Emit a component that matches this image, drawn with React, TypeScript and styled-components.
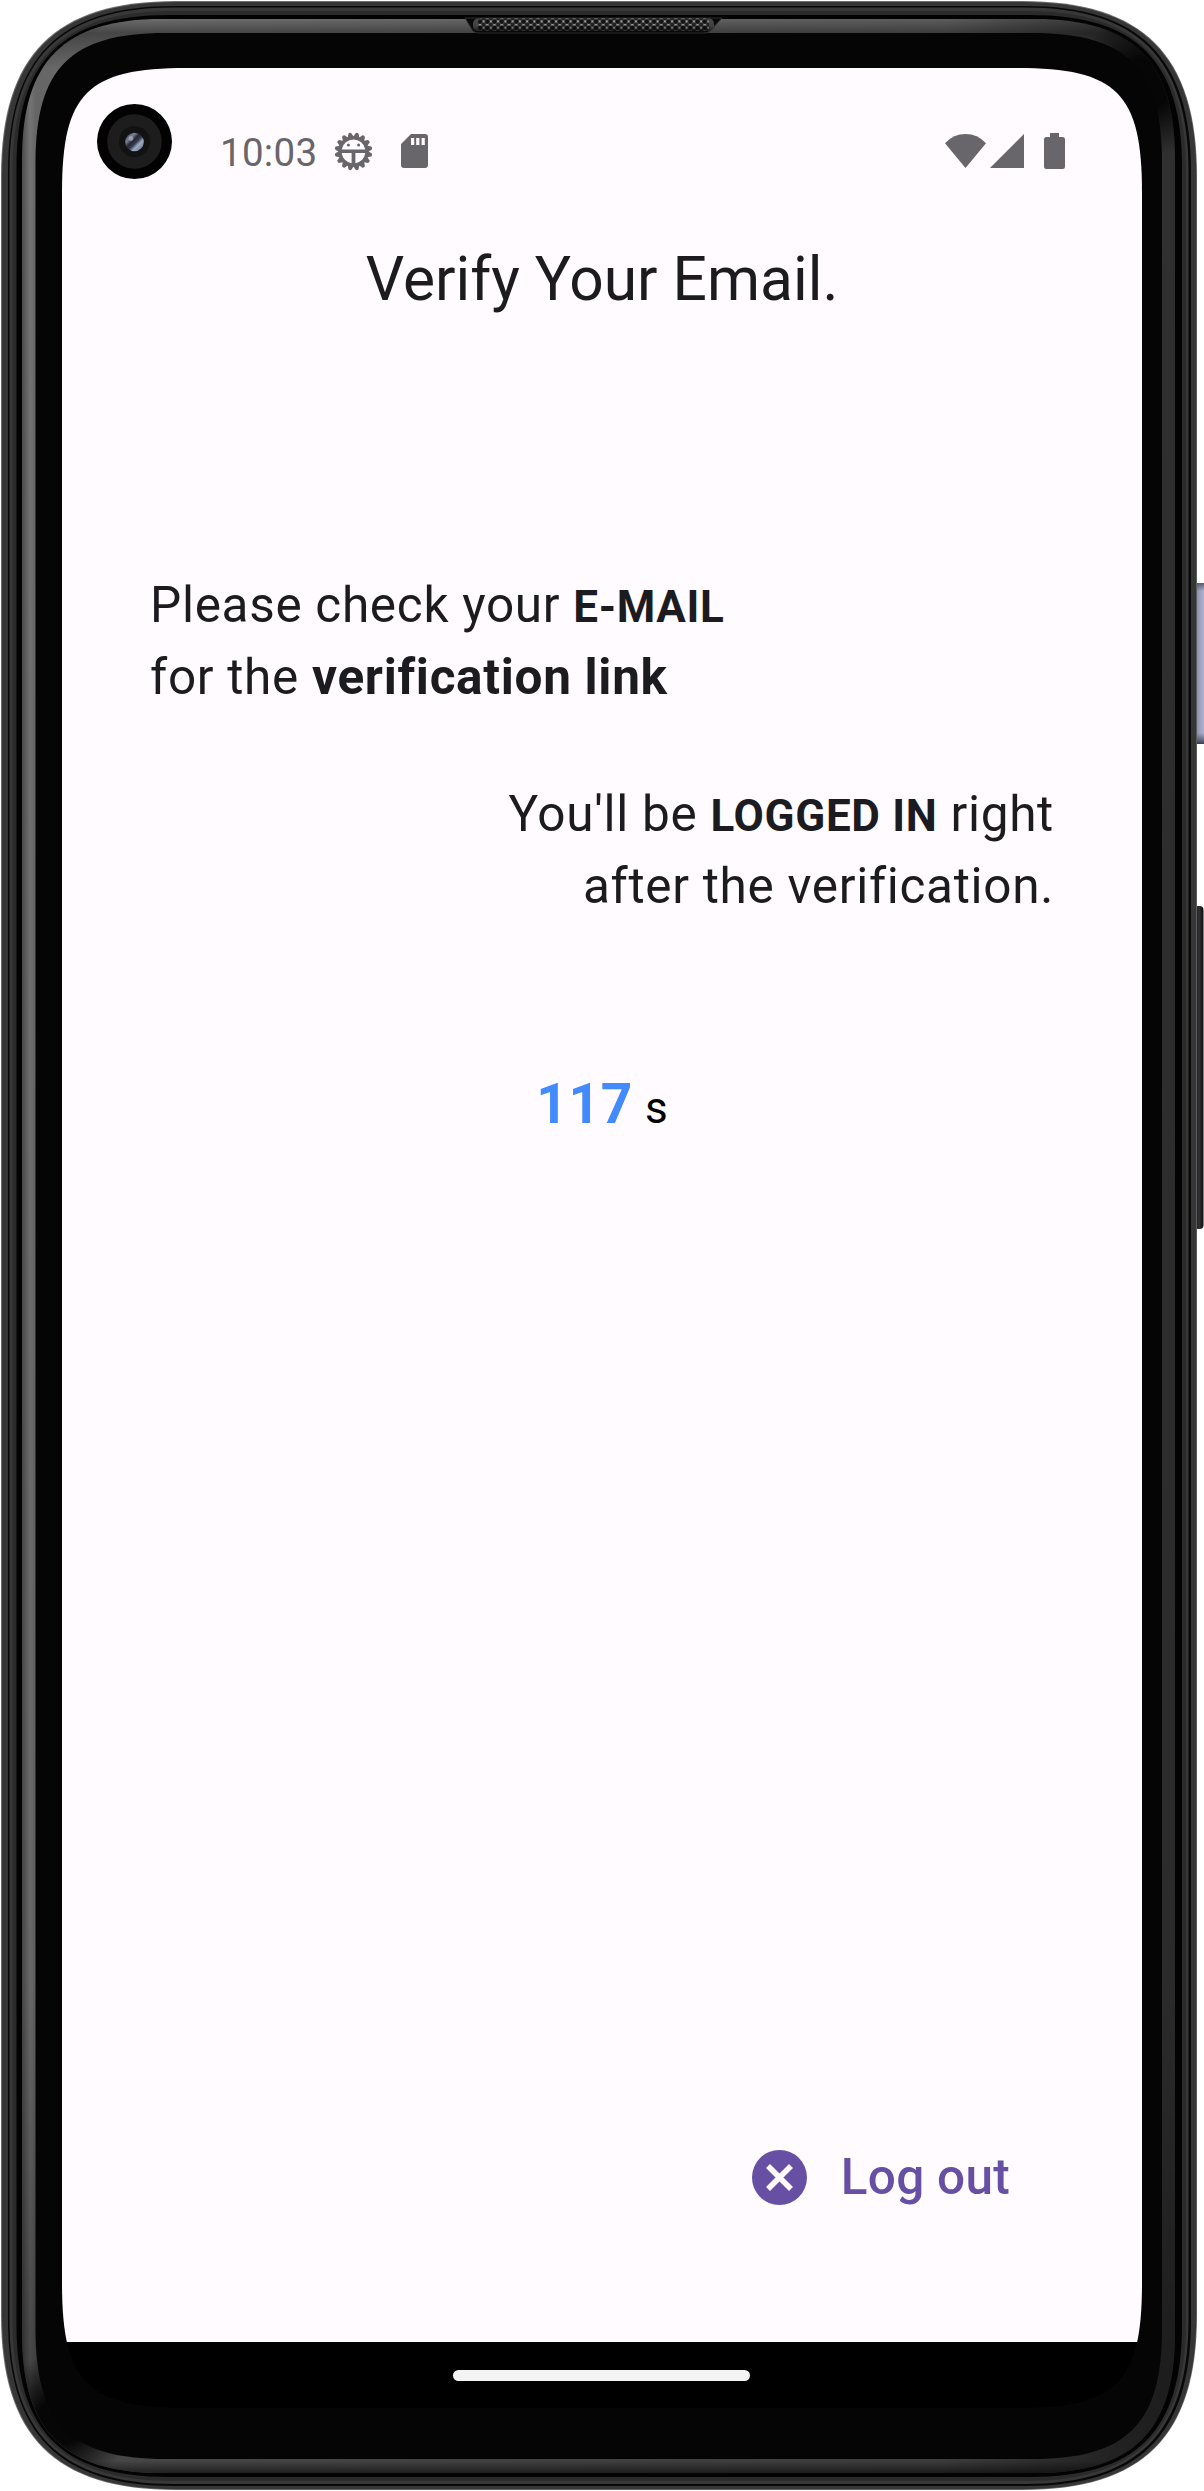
import React from 'react';
import styled, { createGlobalStyle } from 'styled-components';

const GlobalStyle = createGlobalStyle`
  body {
    margin: 0;
    background: #ffffff;
    font-family: Roboto, "Noto Sans", sans-serif;
  }
`;

const INK = '#1c1b1f';
const STATUS = '#69666b';
const PURPLE = '#6750a4';
const SURFACE = '#fffbff';

/* Rounded rectangle with continuous-curvature corners. */
function squircle(l: number, t: number, r: number, b: number, R: number, k: number): string {
  const c = R * (1 - k);
  return [
    `M${l} ${t + R}`,
    `C${l} ${t + c} ${l + c} ${t} ${l + R} ${t}`,
    `L${r - R} ${t}`,
    `C${r - c} ${t} ${r} ${t + c} ${r} ${t + R}`,
    `L${r} ${b - R}`,
    `C${r} ${b - c} ${r - c} ${b} ${r - R} ${b}`,
    `L${l + R} ${b}`,
    `C${l + c} ${b} ${l} ${b - c} ${l} ${b - R}`,
    'Z',
  ].join(' ');
}

const Phone = styled.div`
  position: relative;
  width: 1204px;
  height: 2491px;
  display: flex;
  justify-content: flex-start;
  overflow: hidden;
`;

const Shell = styled.svg`
  position: absolute;
  inset: 0;
`;

const Screen = styled.main`
  position: relative;
  box-sizing: border-box;
  width: 1080px;
  height: 2340px;
  margin: 68px 0 0 62px;
  display: flex;
  flex-direction: column;
  background: linear-gradient(${SURFACE} 2274px, #000000 2274px);
  color: ${INK};
  clip-path: path('${squircle(0, 0, 1080, 2340, 125, 0.8)}');
`;

const StatusBar = styled.header`
  display: flex;
  align-items: center;
  height: 166px;
  box-sizing: border-box;
  padding: 0 77px 0 35px;
`;

const Camera = styled.svg`
  width: 75px;
  height: 75px;
  margin-top: -19px;
`;

const Clock = styled.time`
  margin: 3px 0 0 48px;
  width: 99px;
  font-size: 38.5px;
  line-height: 44px;
  letter-spacing: 0.3px;
  color: ${STATUS};
`;

const StatusIcon = styled.svg<{ $gap: number }>`
  margin-left: ${(p) => p.$gap}px;
  fill: ${STATUS};
  flex: none;
`;

const Spacer = styled.div`
  flex: 1;
`;

const Title = styled.h1`
  margin: 7px 0 0;
  font-size: 60.5px;
  font-weight: 400;
  line-height: 77px;
  text-align: center;
`;

const Messages = styled.section`
  display: flex;
  flex-direction: column;
  gap: 65px;
  margin-top: 251px;
  padding: 0 88px;
`;

const Message = styled.p<{ $align: 'left' | 'right' }>`
  margin: 0;
  font-size: 49.5px;
  line-height: 72px;
  letter-spacing: 0.6875px;
  text-align: ${(p) => p.$align};
`;

const Strong = styled.strong<{ $size?: number }>`
  font-weight: 700;
  font-size: ${(p) => p.$size ?? 49.5}px;
  line-height: 1;
`;

const Countdown = styled.div`
  display: flex;
  justify-content: center;
  align-items: baseline;
  gap: 12px;
  margin-top: 142px;
  line-height: 80px;
`;

const Seconds = styled.span`
  font-size: 55px;
  font-weight: 700;
  color: #448aff;
  letter-spacing: 0.7px;
`;

const Unit = styled.span`
  font-size: 44px;
  color: #000000;
`;

const Actions = styled.footer`
  display: flex;
  justify-content: flex-end;
  margin-top: auto;
  padding: 0 132px 131px 0;
`;

const LogoutButton = styled.button`
  display: flex;
  align-items: center;
  gap: 34px;
  padding: 0;
  border: 0;
  background: none;
  color: ${PURPLE};
  font: 500 49.5px/68px Roboto, "Noto Sans", sans-serif;
  letter-spacing: 0.275px;
`;

const NavigationBar = styled.nav`
  display: flex;
  justify-content: center;
  height: 66px;
  box-sizing: border-box;
  padding: 28px 2px 0 0;
`;

const HomePill = styled.span`
  width: 297px;
  height: 11px;
  border-radius: 6px;
  background: #f5f4f5;
`;

function PhoneShell() {
  const glass = squircle(35.5, 33, 1162, 2459, 130, 0.73);
  const chamfer = squircle(22, 19, 1175, 2473, 140, 0.7);
  return (
    <Shell width="1204" height="2491" viewBox="0 0 1204 2491" aria-hidden="true">
      <defs>
        <clipPath id="chamferClip">
          <path d={chamfer} />
        </clipPath>
        <linearGradient id="chamfer" gradientUnits="userSpaceOnUse" x1="22" y1="0" x2="1175" y2="0">
          <stop offset="0" stopColor="#4c4c4c" />
          <stop offset="0.007" stopColor="#747474" />
          <stop offset="0.012" stopColor="#666666" />
          <stop offset="0.08" stopColor="#6c6c6c" />
          <stop offset="0.8" stopColor="#5c5c5c" />
          <stop offset="0.95" stopColor="#343434" />
          <stop offset="1" stopColor="#2f2f2f" />
        </linearGradient>
        <linearGradient id="chamferShade" gradientUnits="userSpaceOnUse" x1="0" y1="19" x2="0" y2="2473">
          <stop offset="0" stopColor="#000" stopOpacity="0" />
          <stop offset="0.0057" stopColor="#000" stopOpacity="0.35" />
          <stop offset="0.02" stopColor="#000" stopOpacity="0" />
          <stop offset="0.8" stopColor="#000" stopOpacity="0.1" />
          <stop offset="0.96" stopColor="#000" stopOpacity="0.4" />
          <stop offset="0.995" stopColor="#000" stopOpacity="0.35" />
          <stop offset="1" stopColor="#000" stopOpacity="0.7" />
        </linearGradient>
        <radialGradient id="dimCorner">
          <stop offset="0.35" stopColor="#060606" />
          <stop offset="1" stopColor="#060606" stopOpacity="0" />
        </radialGradient>
        <linearGradient id="powerKey" x1="0" y1="0" x2="1" y2="0">
          <stop offset="0" stopColor="#626479" />
          <stop offset="0.3" stopColor="#9698b3" />
          <stop offset="0.75" stopColor="#aeb1cf" />
          <stop offset="1" stopColor="#9597b2" />
        </linearGradient>
        <linearGradient id="powerEnds" x1="0" y1="0" x2="0" y2="1">
          <stop offset="0" stopColor="#44475b" stopOpacity="0.8" />
          <stop offset="0.05" stopColor="#44475b" stopOpacity="0" />
          <stop offset="0.93" stopColor="#44475b" stopOpacity="0" />
          <stop offset="1" stopColor="#34374b" stopOpacity="0.95" />
        </linearGradient>
        <linearGradient id="volumeKey" x1="0" y1="0" x2="1" y2="0">
          <stop offset="0" stopColor="#151517" />
          <stop offset="0.55" stopColor="#303036" />
          <stop offset="1" stopColor="#0c0c0d" />
        </linearGradient>
        <pattern id="mesh" patternUnits="userSpaceOnUse" x="480" y="18.5" width="7.25" height="6.4">
          <rect width="7.25" height="6.4" fill="#b4b4b4" />
          <circle cx="0" cy="2.9" r="2.5" fill="#141414" />
          <circle cx="7.25" cy="2.9" r="2.5" fill="#141414" />
          <circle cx="3.62" cy="6.1" r="2.3" fill="#242424" />
          <circle cx="3.62" cy="-0.3" r="2.3" fill="#242424" />
        </pattern>
        <linearGradient id="meshFade" x1="0" y1="0" x2="0" y2="1">
          <stop offset="0" stopColor="#000" stopOpacity="0.05" />
          <stop offset="0.6" stopColor="#000" stopOpacity="0.15" />
          <stop offset="1" stopColor="#000" stopOpacity="0.6" />
        </linearGradient>
      </defs>

      <rect x="1194" y="583" width="13" height="161" rx="3" fill="url(#powerKey)" />
      <rect x="1194" y="583" width="13" height="161" rx="3" fill="url(#powerEnds)" />
      <rect x="1194" y="906" width="9.5" height="323" rx="4" fill="url(#volumeKey)" />

      <path d={squircle(1, 1, 1197, 2490, 175, 0.693)} fill="#6c6e6d" />
      <path d={squircle(2, 2, 1196.3, 2489.3, 174, 0.693)} fill="#363636" />
      <path d={squircle(8, 6, 1191, 2486, 166, 0.69)} fill="#080808" />
      <path d={squircle(9.5, 7.5, 1188.5, 2484, 164, 0.69)} fill="#383838" />
      <path d={squircle(12.5, 11, 1186, 2481, 160, 0.69)} fill="#2b2b2b" />
      <path d={squircle(16.5, 15, 1182, 2477, 152, 0.7)} fill="#030303" />
      <path d={chamfer} fill="url(#chamfer)" />
      <path d={chamfer} fill="url(#chamferShade)" />
      <g clipPath="url(#chamferClip)">
        <ellipse cx="1146" cy="84" rx="72" ry="72" fill="url(#dimCorner)" />
        <ellipse cx="62" cy="2420" rx="68" ry="68" fill="url(#dimCorner)" />
      </g>
      <path d={glass} fill="#050505" />

      <path d="M465 18H722L710 31Q708 33 704 33H479Q475 33 473 31Z" fill="#090909" stroke="#2c2c2c" />
      <rect x="473" y="18.5" width="241" height="12.5" rx="5" fill="#4c4c4c" />
      <rect x="478" y="18.5" width="231" height="12.5" rx="4" fill="url(#mesh)" />
      <rect x="473" y="18.5" width="241" height="12.5" rx="5" fill="url(#meshFade)" />
    </Shell>
  );
}

function CameraLens() {
  return (
    <Camera viewBox="0 0 75 75" aria-hidden="true">
      <defs>
        <linearGradient id="lens" x1="0" y1="0" x2="1" y2="1">
          <stop offset="0" stopColor="#30323f" />
          <stop offset="0.28" stopColor="#7b8298" />
          <stop offset="0.42" stopColor="#252733" />
          <stop offset="0.55" stopColor="#363a4b" />
          <stop offset="0.68" stopColor="#9dacc6" />
          <stop offset="1" stopColor="#536075" />
        </linearGradient>
      </defs>
      <circle cx="37.5" cy="37.5" r="37.5" fill="#020202" />
      <circle cx="37.5" cy="37.5" r="27.3" fill="#1d1d1d" />
      <circle cx="37.5" cy="37.5" r="15.5" fill="#121213" />
      <circle cx="37.5" cy="38" r="9.3" fill="url(#lens)" />
      <circle cx="34" cy="34.5" r="2.4" fill="#a9b0c4" opacity="0.7" />
    </Camera>
  );
}

function DebugIcon() {
  const teeth = Array.from({ length: 16 }, (_, i) => i * 22.5 + 11.25);
  return (
    <StatusIcon $gap={15} width="39" height="39" viewBox="-19.5 -19.5 39 39">
      {teeth.map((angle) => (
        <path key={angle} d="M-3.4 -13.6L-1.5 -18.4Q0 -19.6 1.5 -18.4L3.4 -13.6Z" transform={`rotate(${angle})`} />
      ))}
      <path
        fillRule="evenodd"
        d="M0 -15.3A15.3 15.3 0 1 1 0 15.3A15.3 15.3 0 1 1 0 -15.3ZM-11.8 -2.1H11.8A12 12 0 0 0 -11.8 -2.1ZM-11.8 1.5A12 12 0 0 0 -1.9 11.8V1.5ZM11.8 1.5H1.9V11.8A12 12 0 0 0 11.8 1.5Z"
      />
      <circle cx="-5.1" cy="-6.4" r="1.5" />
      <circle cx="5.1" cy="-6.4" r="1.5" />
    </StatusIcon>
  );
}

export default function App() {
  return (
    <>
      <GlobalStyle />
      <Phone>
        <PhoneShell />
        <Screen>
          <StatusBar>
            <CameraLens />
            <Clock>10:03</Clock>
            <DebugIcon />
            <StatusIcon $gap={28} width="27" height="34" viewBox="0 0 27 34">
              <path
                fillRule="evenodd"
                d="M10 0H24Q27 0 27 3V31Q27 34 24 34H3Q0 34 0 31V10ZM10 4V11H13.2V4ZM15.2 4V11H18.4V4ZM20.6 4V11H23.8V4Z"
              />
            </StatusIcon>
            <Spacer />
            <StatusIcon $gap={0} width="41" height="34" viewBox="0 0 41 34">
              <path d="M20.5 34L0 9.2Q8.5 0 20.5 0T41 9.2Z" />
            </StatusIcon>
            <StatusIcon $gap={4} width="34" height="34" viewBox="0 0 34 34">
              <path d="M34 0V34H0Z" />
            </StatusIcon>
            <StatusIcon $gap={20} width="21" height="36" viewBox="0 0 21 36">
              <path d="M6 0H15V4H18.5Q21 4 21 6.5V33.5Q21 36 18.5 36H2.5Q0 36 0 33.5V6.5Q0 4 2.5 4H6Z" />
            </StatusIcon>
          </StatusBar>

          <Title>Verify Your Email.</Title>

          <Messages>
            <Message $align="left">
              Please check your <Strong $size={44}>E-MAIL</Strong>
              <br />
              for the <Strong>verification link</Strong>
            </Message>
            <Message $align="right">
              You'll be <Strong $size={44}>LOGGED IN</Strong> right
              <br />
              after the verification.
            </Message>
          </Messages>

          <Countdown>
            <Seconds>117</Seconds>
            <Unit>s</Unit>
          </Countdown>

          <Actions>
            <LogoutButton type="button">
              <svg width="55" height="55" viewBox="0 0 55 55" aria-hidden="true">
                <circle cx="27.5" cy="27.5" r="27.5" fill={PURPLE} />
                <path d="M16 16L39 39M39 16L16 39" stroke={SURFACE} strokeWidth="5.6" />
              </svg>
              Log out
            </LogoutButton>
          </Actions>

          <NavigationBar>
            <HomePill />
          </NavigationBar>
        </Screen>
      </Phone>
    </>
  );
}
